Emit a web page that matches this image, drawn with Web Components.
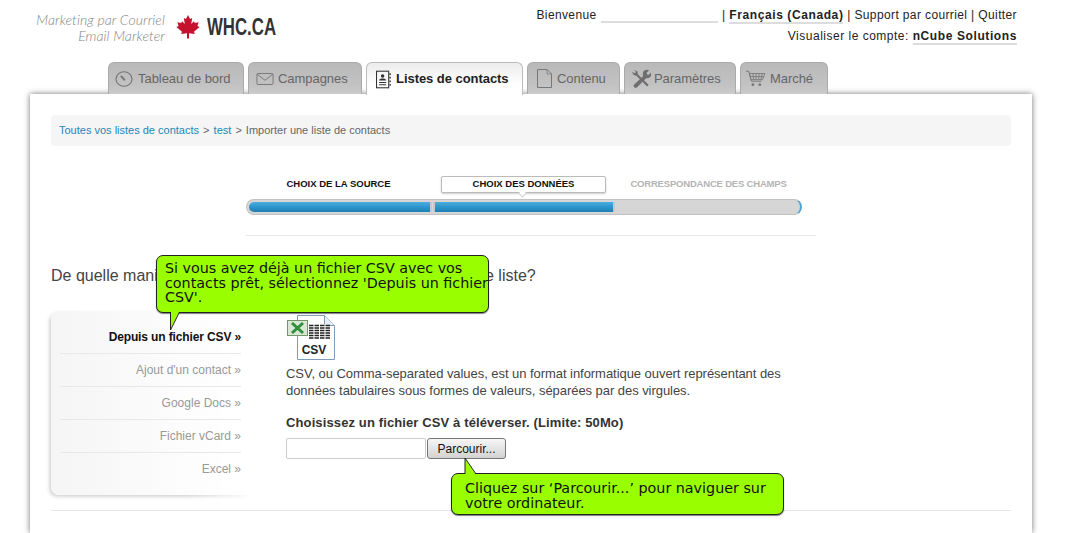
<!DOCTYPE html>
<html lang="fr">
<head>
<meta charset="utf-8">
<title>Importer une liste de contacts</title>
<style>
  html, body { margin: 0; height: 533px; overflow: hidden; background: #fff; }
  body { position: relative; font-family: "Liberation Sans", Arial, sans-serif; color: #444; }
  #cb1 { left: 156px; top: 255px; width: 333px; height: 58px; }
  #cb2 { left: 451px; top: 473px; width: 333px; height: 42px; }
  .heading { margin: 30px 0 0; font-size: 16px; line-height: 20px; font-weight: normal; color: #444; }
  hr { margin: 15px 0 0; height: 1px; border: 0; background: #e6e6e6; }
</style>
</head>
<body>
<whc-header></whc-header>
<whc-tabs>
  <whc-tab w="136" pad="6" gap="5" icon="gauge">Tableau de bord</whc-tab>
  <whc-tab w="114" pad="7" gap="4" icon="mail">Campagnes</whc-tab>
  <whc-tab w="157" pad="9" gap="5" icon="contacts" active>Listes de contacts</whc-tab>
  <whc-tab w="93" pad="9" gap="5" icon="doc">Contenu</whc-tab>
  <whc-tab w="112" pad="7" gap="3" icon="tools">Paramètres</whc-tab>
  <whc-tab w="88" pad="5" gap="4" icon="cart">Marché</whc-tab>
</whc-tabs>
<whc-panel>
  <whc-breadcrumb></whc-breadcrumb>
  <whc-steps></whc-steps>
  <h2 class="heading">De quelle manière souhaitez-vous ajouter des contacts à votre liste?</h2>
  <whc-import>
    <whc-source-menu></whc-source-menu>
    <whc-upload></whc-upload>
  </whc-import>
  <hr>
</whc-panel>
<whc-callout id="cb1" tail="a">Si vous avez déjà un fichier CSV avec vos<br>contacts prêt, sélectionnez 'Depuis un fichier<br>CSV'.</whc-callout>
<whc-callout id="cb2" tail="b">Cliquez sur ‘Parcourir...’ pour naviguer sur<br>votre ordinateur.</whc-callout>

<script>
class WhcHeader extends HTMLElement {
  constructor() {
    super();
    this.attachShadow({ mode: "open" });
  }
  connectedCallback() {
    this.shadowRoot.innerHTML = `
      <style>
        :host { display: flex; justify-content: space-between; height: 62px; font-family: "Liberation Sans", Arial, sans-serif; }
        .logo { display: flex; align-items: flex-start; padding: 12px 0 0 0; }
        .tag { width: 165px; text-align: right; font: italic 300 14px/16px Lato, sans-serif; color: #858585; letter-spacing: .07px; white-space: nowrap; }
        .leaf { margin: 3px 0 0 10px; }
        .name { display: inline-block; margin: 1px 0 0 6px; font: bold 24px/28px "Liberation Sans", sans-serif; color: #333; transform: scaleX(.7); transform-origin: 0 50%; }
        .links { padding: 5px 53px 0 0; text-align: right; font-size: 12px; line-height: 21px; color: #222; letter-spacing: .38px; }
        .line2 { letter-spacing: .5px; }
        .u { border-bottom: 2px solid #ddd; letter-spacing: .6px; }
        .blank { display: inline-block; width: 117px; height: 16px; vertical-align: top; margin-left: 1px; border-bottom: 2px solid #ddd; }
        b { color: #222; }
      </style>
      <div class="logo">
        <div class="tag">Marketing par Courriel<br>Email Marketer</div>
        <svg class="leaf" width="26" height="24" viewBox="0 0 26 24"><polygon fill="#c4122f" points="13,0 15,4 17.2,3 16.2,9 19,6.2 19.8,8 23.6,7.2 22.4,11 24.6,12 19,16.8 19.8,19 14,18.2 14,23.5 12,23.5 12,18.2 6.2,19 7,16.8 1.4,12 3.6,11 2.4,7.2 6.2,8 7,6.2 9.8,9 8.8,3 11,4"/></svg>
        <span class="name">WHC.CA</span>
      </div>
      <div class="links">
        <div>Bienvenue <span class="blank"></span> | <b class="u">Français (Canada)</b> | Support par courriel | Quitter</div>
        <div class="line2">Visualiser le compte: <b class="u">nCube Solutions</b></div>
      </div>`;
  }
}

class WhcTabs extends HTMLElement {
  constructor() {
    super();
    this.attachShadow({ mode: "open" });
    this.shadowRoot.innerHTML = `
      <style>
        :host { display: flex; gap: 4px; height: 32px; padding-left: 108px; position: relative; z-index: 2; }
      </style>
      <slot></slot>`;
  }
}

const TAB_ICONS = {
  gauge: `<svg width="18" height="16" viewBox="0 0 20 18" fill="none" stroke="#777" stroke-width="1.3"><ellipse cx="10" cy="9" rx="9" ry="8.2"/><path d="M6.5 5.5L11 10.5" stroke-width="2.2"/></svg>`,
  mail: `<svg width="18" height="12" viewBox="0 0 20 14" fill="none" stroke="#777" stroke-width="1.1"><rect x=".6" y=".6" width="18.8" height="12.8" rx="1"/><path d="M1 1.5L10 8.5L19 1.5"/></svg>`,
  contacts: `<svg width="15" height="19" viewBox="0 0 17 20" fill="none" stroke="#333"><rect x=".6" y=".6" width="13.8" height="18.8" stroke-width="1.2"/><circle cx="7.5" cy="6" r="2" fill="#333" stroke="none"/><path d="M3.5 11c0-3 8-3 8 0z" fill="#333" stroke="none"/><path d="M3.5 13.5h8M3.5 16h8" stroke-width="1.2"/><path d="M16 3v2M16 7v2M16 11v2M16 15v2" stroke-width="1.6"/></svg>`,
  doc: `<svg width="15" height="19" viewBox="0 0 15 19" fill="none" stroke="#777" stroke-width="1"><path d="M.5 .5H10L14.5 5V18.5H.5z"/><path d="M10 .5V5H14.5" stroke-width=".7"/></svg>`,
  tools: `<svg width="19" height="19" viewBox="0 0 24 24" fill="#6e6e6e"><path d="M2.5 1L7 3.2l.4 3.4 13.5 13.3-1.7 2.2L5.6 8.6 2.2 7.6 0 3.4l3.4 2 1.7-1.6z"/><path d="M15 2.2c2-1.8 5-1.8 6.6-.4L18.5 4.6l.6 2.2 2.3.6 2.4-3c1 2.4.4 5-1.6 6.4-1.6 1-3 .8-4 .5L6.4 23c-1 1-2.6 1-3.6 0s-1-2.4 0-3.4L14 9c-.6-2.4-.4-5 1-6.8z"/></svg>`,
  cart: `<svg width="20" height="17" viewBox="0 0 26 22" fill="none" stroke="#777" stroke-width="1.1"><path d="M0 1.5h3.5l3.5 13h13" stroke-width="1.3"/><path d="M4.5 4.5H24.5L21.5 12.5H6.5zM9 4.5L10 12.5M13 4.5V12.5M17 4.5L16.5 12.5M21 4.5L19.5 12.5M5.5 8.5H23"/><circle cx="9" cy="19" r="1.8" fill="#777" stroke="none"/><circle cx="18" cy="19" r="1.8" fill="#777" stroke="none"/></svg>`,
};

class WhcTab extends HTMLElement {
  constructor() {
    super();
    this.attachShadow({ mode: "open" });
  }
  connectedCallback() {
    this.style.width = this.getAttribute("w") + "px";
    this.style.paddingLeft = this.getAttribute("pad") + "px";
    this.style.gap = this.getAttribute("gap") + "px";
    this.shadowRoot.innerHTML = `
      <style>
        :host { display: flex; align-items: center; box-sizing: border-box; height: 32px;
          border: 1px solid #aaa; border-bottom: 0; border-radius: 6px 6px 0 0;
          background: linear-gradient(#b9b9b9, #c2c2c2 70%, #cbcbcb);
          font: 13px/16px "Liberation Sans", Arial, sans-serif; color: #666; white-space: nowrap; letter-spacing: -.05px; }
        :host([active]) { height: 33px; background: linear-gradient(#ececec, #fff 70%); border-color: #bbb; color: #222; font-weight: bold; }
        span { display: flex; }
      </style>
      <span>${TAB_ICONS[this.getAttribute("icon")]}</span><slot></slot>`;
  }
}

class WhcPanel extends HTMLElement {
  constructor() {
    super();
    this.attachShadow({ mode: "open" });
    this.shadowRoot.innerHTML = `
      <style>
        :host { display: block; box-sizing: border-box; width: 1002px; height: 439px; margin-left: 30px; padding: 21px 21px 0;
          background: #fff; box-shadow: 0 0 6px rgba(0,0,0,.55); }
      </style>
      <slot></slot>`;
  }
}

class WhcBreadcrumb extends HTMLElement {
  constructor() {
    super();
    this.attachShadow({ mode: "open" });
    this.shadowRoot.innerHTML = `
      <style>
        :host { display: block; height: 31px; padding-left: 8px; background: #f5f5f5; border-radius: 4px;
          font: 11px/31px "Liberation Sans", Arial, sans-serif; color: #666; }
        a { color: #1b87b9; text-decoration: none; }
        i { font-style: normal; margin: 0 1px; }
      </style>
      <a href="#">Toutes vos listes de contacts</a> <i>&gt;</i> <a href="#">test</a> <i>&gt;</i> Importer une liste de contacts`;
  }
}

class WhcSteps extends HTMLElement {
  constructor() {
    super();
    this.attachShadow({ mode: "open" });
    this.shadowRoot.innerHTML = `
      <style>
        :host { display: block; box-sizing: border-box; width: 570px; height: 60px; margin: 30px 0 0 195px; border-bottom: 1px solid #e6e6e6;
          font: bold 9.5px/16px "Liberation Sans", Arial, sans-serif; }
        .labels { display: grid; grid-template-columns: 185px 165px 205px; height: 17px; }
        .labels div { text-align: center; color: #111; }
        .labels .now { position: relative; margin-left: 10px; box-sizing: border-box; width: 165px; background: #fff; border: 1px solid #bbb; border-radius: 2px; box-shadow: 0 1px 2px rgba(0,0,0,.2); line-height: 14px; }
        .now::after { content: ""; position: absolute; left: 77px; bottom: -5px; width: 6px; height: 6px; background: #fff; border: solid #c4c4c4; border-width: 0 1px 1px 0; transform: rotate(45deg) scale(.8); }
        .labels .next { color: #b4b4b4; padding-left: 20px; white-space: nowrap; letter-spacing: -.19px; }
        .bar { display: grid; grid-template-columns: 181px 178px 1fr; gap: 5px; box-sizing: border-box; width: 556px; height: 16px; margin-top: 6px; padding: 2px; background: #d6d6d6; border: 1px solid #c2c2c2; border-right: 2px solid #4da6d6; border-radius: 8px; }
        .bar i { display: block; background: linear-gradient(#4aaedf, #2b93c9 55%, #1f7fb2); }
        .bar i:first-child { border-radius: 6px 0 0 6px; box-shadow: 2px 0 0 #c8c8c8; }
        .bar i:nth-child(2) { box-shadow: -2px 0 0 #c8c8c8, 2px 0 0 #c8c8c8; }
        .bar u { display: block; }
      </style>
      <div class="labels">
        <div>CHOIX DE LA SOURCE</div>
        <div class="now">CHOIX DES DONNÉES</div>
        <div class="next">CORRESPONDANCE DES CHAMPS</div>
      </div>
      <div class="bar"><i></i><i></i><u></u></div>`;
  }
}

class WhcImport extends HTMLElement {
  constructor() {
    super();
    this.attachShadow({ mode: "open" });
    this.shadowRoot.innerHTML = `
      <style>
        :host { display: flex; gap: 35px; margin-top: 25px; }
      </style>
      <slot></slot>`;
  }
}

class WhcSourceMenu extends HTMLElement {
  constructor() {
    super();
    this.attachShadow({ mode: "open" });
    const items = ["Depuis un fichier CSV", "Ajout d'un contact", "Google Docs", "Fichier vCard", "Excel"];
    this.shadowRoot.innerHTML = `
      <style>
        :host { position: relative; display: block; box-sizing: border-box; flex: 0 0 200px; height: 184px; padding: 10px 10px 0 9px; border-radius: 8px 0 0 8px;
          background: linear-gradient(90deg, #f5f5f5, #fdfdfd 70%, #fff);
          box-shadow: -2px 2px 4px -1px rgba(0,0,0,.24);
          font: 12px/32px "Liberation Sans", Arial, sans-serif; }
        :host::after { content: ""; position: absolute; right: -6px; top: -2px; bottom: -8px; width: 70px; background: linear-gradient(90deg, rgba(255,255,255,0), #fff); pointer-events: none; }
        div { position: relative; z-index: 1; height: 32px; border-bottom: 1px solid #e8e8e8; text-align: right; color: #999; }
        div:last-child { border: 0; }
        div.on { color: #111; font-weight: bold; letter-spacing: -.13px; }
      </style>
      ${items.map((t, i) => `<div class="${i ? "" : "on"}">${t} »</div>`).join("")}`;
  }
}

class WhcUpload extends HTMLElement {
  constructor() {
    super();
    this.attachShadow({ mode: "open" });
    this.shadowRoot.innerHTML = `
      <style>
        :host { display: block; flex: 1; padding-top: 4px; font: 13px/17px "Liberation Sans", Arial, sans-serif; color: #444; }
        svg { display: block; margin-left: 1px; }
        p { margin: 4px 0 0; width: 520px; letter-spacing: -.05px; }
        h3 { margin: 15px 0 0; font-size: 13px; line-height: 17px; color: #333; letter-spacing: .12px; }
        .row { display: flex; gap: 1px; margin-top: 7px; height: 21px; }
        .field { box-sizing: border-box; width: 140px; border: 1px solid #ccc; border-radius: 2px; background: #fff; }
        button { box-sizing: border-box; width: 79px; height: 21px; padding: 0; border: 1px solid #777; border-radius: 3px; background: linear-gradient(#f6f6f6, #d2d2d2); font: 12px "Liberation Sans", Arial, sans-serif; color: #111; }
      </style>
      <svg width="48" height="46" viewBox="0 0 48 46">
        <path d="M10.5 .5H37.5L47.5 10.5V44.5H10.5z" fill="#fff" stroke="#7f9db9"/>
        <path d="M37.5 .5V10.5H47.5" fill="#e6eef5" stroke="#7f9db9"/>
        <g stroke="#222" stroke-width="1.3"><path d="M22 10.5h21M22 13h21M22 15.5h21M22 18h21M22 20.5h21M22 23h21"/></g>
        <g stroke="#fff" stroke-width="1"><path d="M27 9v15M32.5 9v15M38 9v15"/></g>
        <rect x=".5" y="5.5" width="20" height="15" fill="#d9e7d4" stroke="#6f9a68"/>
        <path d="M5 8L16 18M16 8L5 18" stroke="#2f8f3a" stroke-width="3"/>
        <text x="27" y="38.5" text-anchor="middle" font-family="Liberation Sans, sans-serif" font-weight="bold" font-size="12" fill="#222">CSV</text>
      </svg>
      <p>CSV, ou Comma-separated values, est un format informatique ouvert représentant des données tabulaires sous formes de valeurs, séparées par des virgules.</p>
      <h3>Choisissez un fichier CSV à téléverser. (Limite: 50Mo)</h3>
      <div class="row"><div class="field"></div><button type="button">Parcourir...</button></div>`;
  }
}

class WhcCallout extends HTMLElement {
  constructor() {
    super();
    this.attachShadow({ mode: "open" });
  }
  connectedCallback() {
    const a = this.getAttribute("tail") === "a";
    const tail = a
      ? `<svg style="left:12px;top:56px" width="12" height="20" viewBox="0 0 12 20"><path d="M1.5 0V18L10 0" fill="#99ff00"/><path d="M1.5 0V18L10 1" fill="none" stroke="#222"/></svg>`
      : `<svg style="left:12px;top:-17px" width="14" height="18" viewBox="0 0 14 18"><path d="M1 18V1L12 18z" fill="#99ff00"/><path d="M1 17V1L12 17" fill="none" stroke="#222"/></svg>`;
    this.shadowRoot.innerHTML = `
      <style>
        :host { position: absolute; z-index: 5; display: block; box-sizing: border-box; padding: ${a ? "5px" : "7px"} 0 0 ${a ? "8px" : "13px"};
          background: #99ff00; border: 1px solid #222; border-radius: 7px; box-shadow: 0 1px 1px rgba(0,0,0,.5);
          font: 14.3px/14.5px "DejaVu Sans", Verdana, sans-serif; color: #111; white-space: nowrap; }
        svg { position: absolute; display: block; }
      </style>
      <slot></slot>${tail}`;
  }
}

customElements.define("whc-header", WhcHeader);
customElements.define("whc-tabs", WhcTabs);
customElements.define("whc-tab", WhcTab);
customElements.define("whc-panel", WhcPanel);
customElements.define("whc-breadcrumb", WhcBreadcrumb);
customElements.define("whc-steps", WhcSteps);
customElements.define("whc-import", WhcImport);
customElements.define("whc-source-menu", WhcSourceMenu);
customElements.define("whc-upload", WhcUpload);
customElements.define("whc-callout", WhcCallout);
</script>
</body>
</html>
